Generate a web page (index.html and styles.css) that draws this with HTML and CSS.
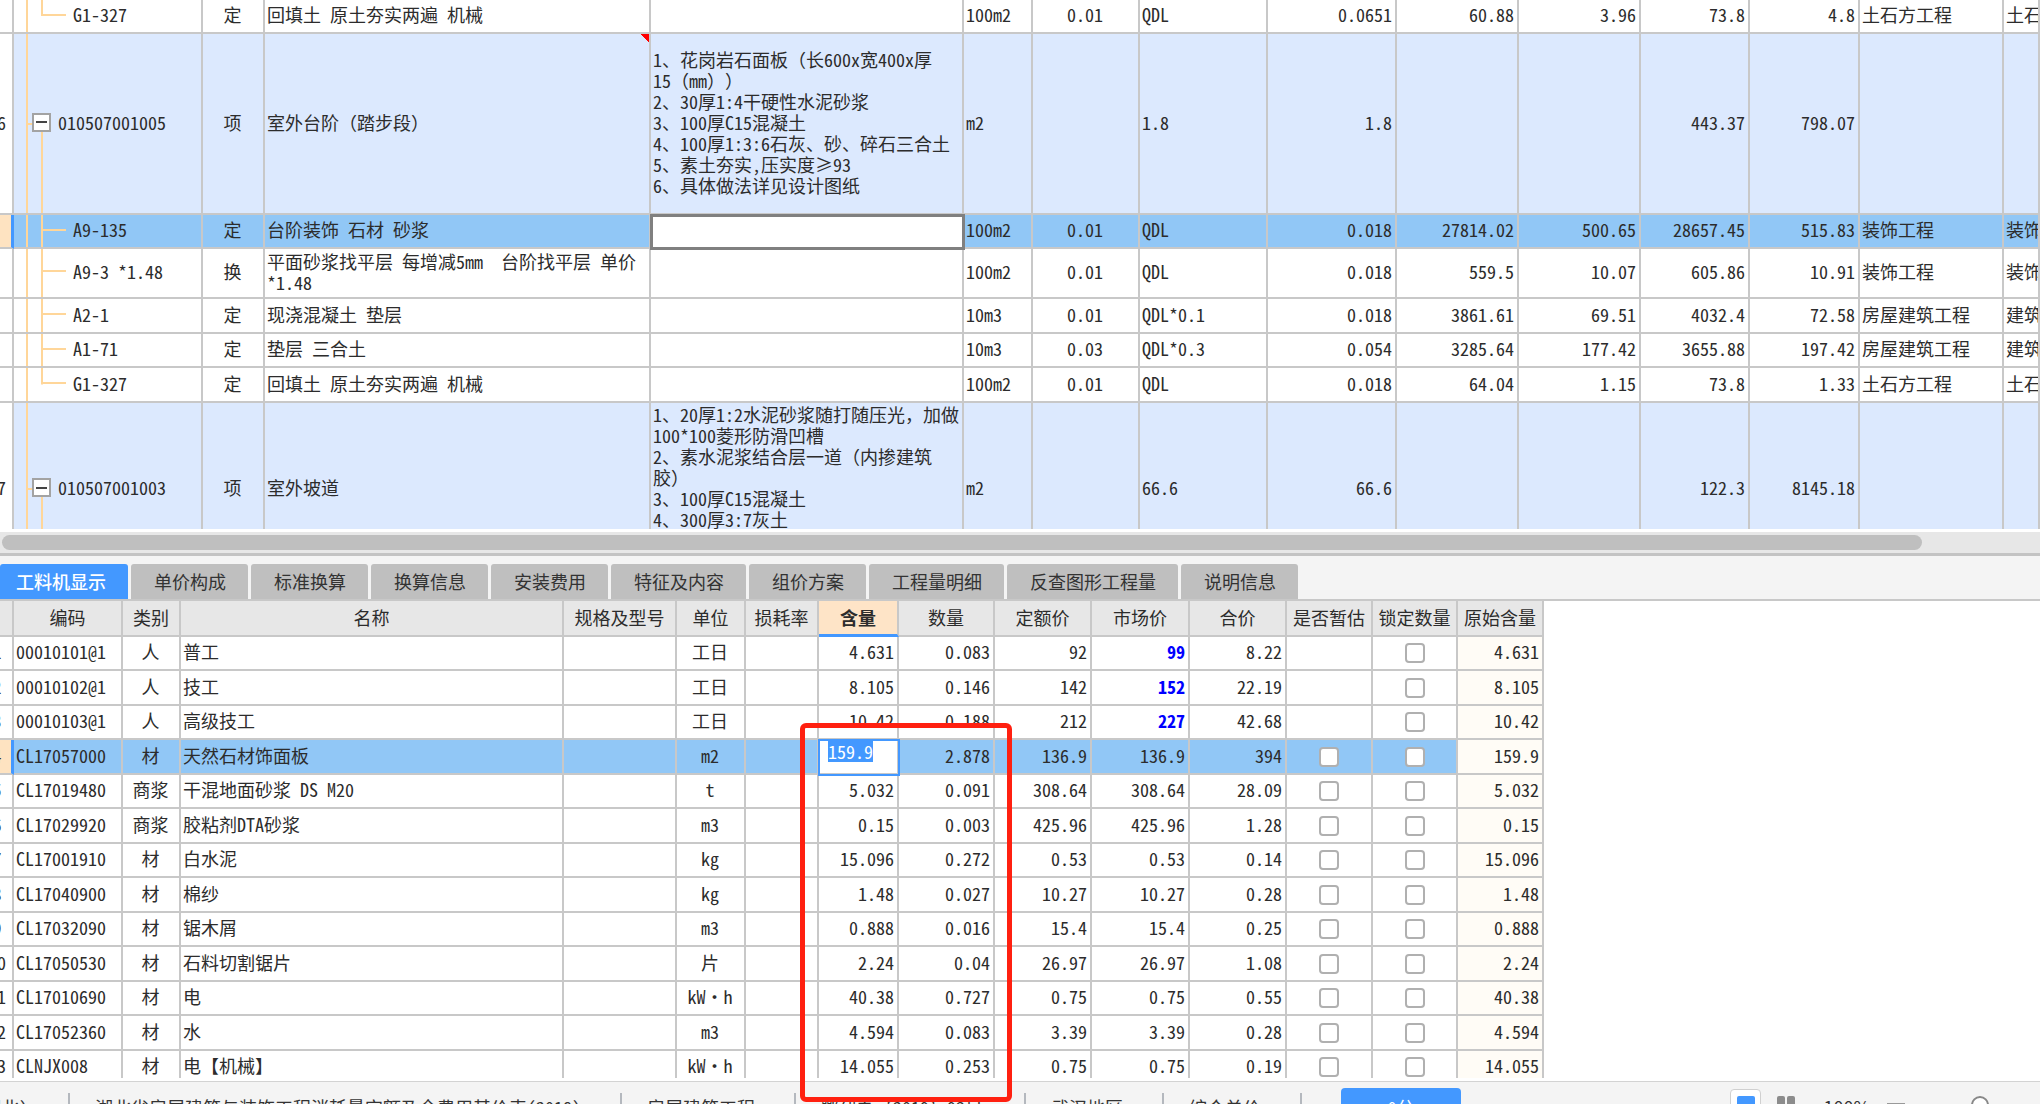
FILE: index.html
```html
<!DOCTYPE html>
<html lang="zh-CN">
<head>
<meta charset="utf-8">
<title>工程计价</title>
<link rel="stylesheet" href="styles.css">
</head>
<body>
<div class="app">
<section class="bill-pane">
<table class="grid bill">
<colgroup><col class="w14"><col class="w189"><col class="w62"><col class="w386"><col class="w313"><col class="w69"><col class="w107"><col class="w128"><col class="w129"><col class="w122"><col class="w122"><col class="w109"><col class="w110"><col class="w144"><col></colgroup>
<tbody>
<tr><td class="no"></td><td class="tree last">G1-327</td><td>定</td><td>回填土 原土夯实两遍 机械</td><td></td><td>100m2</td><td>0.01</td><td>QDL</td><td>0.0651</td><td>60.88</td><td>3.96</td><td>73.8</td><td>4.8</td><td>土石方工程</td><td>土石方工程</td></tr>
<tr class="group"><td class="no"><span>&nbsp;6</span></td><td class="tree head"><div class="node"><button class="toggle" type="button" aria-label="折叠 010507001005"></button>010507001005</div></td><td>项</td><td class="noted">室外台阶<span class="full">（</span>踏步段<span class="full">）</span></td><td>1、花岗岩石面板<span class="full">（</span>长600x宽400x厚
15<span class="full">（</span>mm<span class="full">））</span>
2、30厚1:4干硬性水泥砂浆
3、100厚C15混凝土
4、100厚1:3:6石灰、砂、碎石三合土
5、素土夯实,压实度≥93
6、具体做法详见设计图纸</td><td>m2</td><td></td><td>1.8</td><td>1.8</td><td></td><td></td><td>443.37</td><td>798.07</td><td></td><td></td></tr>
<tr class="selected"><td class="no"></td><td class="tree">A9-135</td><td>定</td><td>台阶装饰 石材 砂浆</td><td class="active-cell"></td><td>100m2</td><td>0.01</td><td>QDL</td><td>0.018</td><td>27814.02</td><td>500.65</td><td>28657.45</td><td>515.83</td><td>装饰工程</td><td>装饰工程</td></tr>
<tr class="double"><td class="no"></td><td class="tree">A9-3 *1.48</td><td>换</td><td>平面砂浆找平层 每增减5mm  台阶找平层 单价
*1.48</td><td></td><td>100m2</td><td>0.01</td><td>QDL</td><td>0.018</td><td>559.5</td><td>10.07</td><td>605.86</td><td>10.91</td><td>装饰工程</td><td>装饰工程</td></tr>
<tr class="tall"><td class="no"></td><td class="tree">A2-1</td><td>定</td><td>现浇混凝土 垫层</td><td></td><td>10m3</td><td>0.01</td><td>QDL*0.1</td><td>0.018</td><td>3861.61</td><td>69.51</td><td>4032.4</td><td>72.58</td><td>房屋建筑工程</td><td>建筑工程</td></tr>
<tr><td class="no"></td><td class="tree">A1-71</td><td>定</td><td>垫层 三合土</td><td></td><td>10m3</td><td>0.03</td><td>QDL*0.3</td><td>0.054</td><td>3285.64</td><td>177.42</td><td>3655.88</td><td>197.42</td><td>房屋建筑工程</td><td>建筑工程</td></tr>
<tr class="tall"><td class="no"></td><td class="tree last">G1-327</td><td>定</td><td>回填土 原土夯实两遍 机械</td><td></td><td>100m2</td><td>0.01</td><td>QDL</td><td>0.018</td><td>64.04</td><td>1.15</td><td>73.8</td><td>1.33</td><td>土石方工程</td><td>土石方工程</td></tr>
<tr class="group ramp"><td class="no"><span>&nbsp;7</span></td><td class="tree head"><div class="node"><button class="toggle" type="button" aria-label="折叠 010507001003"></button>010507001003</div></td><td>项</td><td>室外坡道</td><td class="from-top">1、20厚1:2水泥砂浆随打随压光<span class="full">，</span>加做
100*100菱形防滑凹槽
2、素水泥浆结合层一道<span class="full">（</span>内掺建筑
胶<span class="full">）</span>
3、100厚C15混凝土
4、300厚3:7灰土</td><td>m2</td><td></td><td>66.6</td><td>66.6</td><td></td><td></td><td>122.3</td><td>8145.18</td><td></td><td></td></tr>
</tbody>
</table>
</section>
<div class="hscroll"><div class="thumb"></div></div>
<nav class="tabs">
<button type="button" class="tab current">工料机显示</button><button type="button" class="tab">单价构成</button><button type="button" class="tab">标准换算</button><button type="button" class="tab">换算信息</button><button type="button" class="tab">安装费用</button><button type="button" class="tab">特征及内容</button><button type="button" class="tab">组价方案</button><button type="button" class="tab">工程量明细</button><button type="button" class="tab">反查图形工程量</button><button type="button" class="tab">说明信息</button>
</nav>
<section class="detail-pane">
<div class="detail-clip">
<table class="grid detail">
<colgroup><col class="w14"><col class="w109"><col class="w58"><col class="w383"><col class="w113"><col class="w69"><col class="w73"><col class="w80"><col class="w96"><col class="w97"><col class="w98"><col class="w97"><col class="w86"><col class="w85"><col class="w86"></colgroup>
<thead><tr><th></th><th>编码</th><th>类别</th><th>名称</th><th>规格及型号</th><th>单位</th><th>损耗率</th><th class="sorted">含量</th><th>数量</th><th>定额价</th><th>市场价</th><th>合价</th><th>是否暂估</th><th>锁定数量</th><th>原始含量</th></tr></thead>
<tbody>
<tr><td class="no"><span>1</span></td><td>00010101@1</td><td>人</td><td>普工</td><td></td><td>工日</td><td></td><td>4.631</td><td>0.083</td><td>92</td><td class="changed">99</td><td>8.22</td><td></td><td><input type="checkbox" aria-label="锁定数量"></td><td>4.631</td></tr>
<tr><td class="no"><span>2</span></td><td>00010102@1</td><td>人</td><td>技工</td><td></td><td>工日</td><td></td><td>8.105</td><td>0.146</td><td>142</td><td class="changed">152</td><td>22.19</td><td></td><td><input type="checkbox" aria-label="锁定数量"></td><td>8.105</td></tr>
<tr><td class="no"><span>3</span></td><td>00010103@1</td><td>人</td><td>高级技工</td><td></td><td>工日</td><td></td><td>10.42</td><td>0.188</td><td>212</td><td class="changed">227</td><td>42.68</td><td></td><td><input type="checkbox" aria-label="锁定数量"></td><td>10.42</td></tr>
<tr class="selected"><td class="no"><span>4</span></td><td>CL17057000</td><td>材</td><td>天然石材饰面板</td><td></td><td>m2</td><td></td><td class="editing"><input class="editor" type="text" value="159.9" aria-label="含量"></td><td>2.878</td><td>136.9</td><td>136.9</td><td>394</td><td><input type="checkbox" aria-label="是否暂估"></td><td><input type="checkbox" aria-label="锁定数量"></td><td>159.9</td></tr>
<tr><td class="no"><span>5</span></td><td>CL17019480</td><td>商浆</td><td>干混地面砂浆 DS M20</td><td></td><td>t</td><td></td><td>5.032</td><td>0.091</td><td>308.64</td><td>308.64</td><td>28.09</td><td><input type="checkbox" aria-label="是否暂估"></td><td><input type="checkbox" aria-label="锁定数量"></td><td>5.032</td></tr>
<tr><td class="no"><span>6</span></td><td>CL17029920</td><td>商浆</td><td>胶粘剂DTA砂浆</td><td></td><td>m3</td><td></td><td>0.15</td><td>0.003</td><td>425.96</td><td>425.96</td><td>1.28</td><td><input type="checkbox" aria-label="是否暂估"></td><td><input type="checkbox" aria-label="锁定数量"></td><td>0.15</td></tr>
<tr><td class="no"><span>7</span></td><td>CL17001910</td><td>材</td><td>白水泥</td><td></td><td>kg</td><td></td><td>15.096</td><td>0.272</td><td>0.53</td><td>0.53</td><td>0.14</td><td><input type="checkbox" aria-label="是否暂估"></td><td><input type="checkbox" aria-label="锁定数量"></td><td>15.096</td></tr>
<tr><td class="no"><span>8</span></td><td>CL17040900</td><td>材</td><td>棉纱</td><td></td><td>kg</td><td></td><td>1.48</td><td>0.027</td><td>10.27</td><td>10.27</td><td>0.28</td><td><input type="checkbox" aria-label="是否暂估"></td><td><input type="checkbox" aria-label="锁定数量"></td><td>1.48</td></tr>
<tr><td class="no"><span>9</span></td><td>CL17032090</td><td>材</td><td>锯木屑</td><td></td><td>m3</td><td></td><td>0.888</td><td>0.016</td><td>15.4</td><td>15.4</td><td>0.25</td><td><input type="checkbox" aria-label="是否暂估"></td><td><input type="checkbox" aria-label="锁定数量"></td><td>0.888</td></tr>
<tr><td class="no"><span>10</span></td><td>CL17050530</td><td>材</td><td>石料切割锯片</td><td></td><td>片</td><td></td><td>2.24</td><td>0.04</td><td>26.97</td><td>26.97</td><td>1.08</td><td><input type="checkbox" aria-label="是否暂估"></td><td><input type="checkbox" aria-label="锁定数量"></td><td>2.24</td></tr>
<tr><td class="no"><span>11</span></td><td>CL17010690</td><td>材</td><td>电</td><td></td><td>kW·h</td><td></td><td>40.38</td><td>0.727</td><td>0.75</td><td>0.75</td><td>0.55</td><td><input type="checkbox" aria-label="是否暂估"></td><td><input type="checkbox" aria-label="锁定数量"></td><td>40.38</td></tr>
<tr><td class="no"><span>12</span></td><td>CL17052360</td><td>材</td><td>水</td><td></td><td>m3</td><td></td><td>4.594</td><td>0.083</td><td>3.39</td><td>3.39</td><td>0.28</td><td><input type="checkbox" aria-label="是否暂估"></td><td><input type="checkbox" aria-label="锁定数量"></td><td>4.594</td></tr>
<tr><td class="no"><span>13</span></td><td>CLNJX008</td><td>材</td><td>电【机械】</td><td></td><td>kW·h</td><td></td><td>14.055</td><td>0.253</td><td>0.75</td><td>0.75</td><td>0.19</td><td><input type="checkbox" aria-label="是否暂估"></td><td><input type="checkbox" aria-label="锁定数量"></td><td>14.055</td></tr>
</tbody>
</table>
</div>
<div class="callout"></div>
</section>
<footer class="status">
<div class="status-row">
<span class="item first">(湖北)</span><span class="item">湖北省房屋建筑与装饰工程消耗量定额及全费用基价表(2018)</span><span class="item">房屋建筑工程</span><span class="item doc">鄂建办〔2019〕93号</span><span class="item">武汉地区</span><span class="item">综合单价</span>
<button type="button" class="score">0分</button>
<div class="zoom">
<button type="button" class="view on" aria-label="单栏"><svg width="18" height="22" viewBox="0 0 18 22"><rect width="18" height="22" rx="2" fill="#4398ff"/></svg></button>
<button type="button" class="view" aria-label="双栏"><svg width="18" height="22" viewBox="0 0 18 22"><rect width="8" height="22" rx="2" fill="#8c8c8c"/><rect x="10" width="8" height="22" rx="2" fill="#8c8c8c"/></svg></button>
<span class="percent full">100%</span>
<button type="button" class="minus" aria-label="缩小"></button>
<input type="range" class="slider" aria-label="缩放" min="0" max="100" value="42">
</div>
</div>
</footer>
</div>
</body>
</html>
```

FILE: styles.css
```css
* { box-sizing: border-box; }

body {
  margin: 0;
  background: #fff;
  color: #2c2c2c;
  font-family: "Noto Sans CJK SC", sans-serif;
  font-size: 18px;
  line-height: 21px;
  font-feature-settings: "hwid";
  text-spacing-trim: space-all;
  overflow: hidden;
}

/* keeps full-width punctuation at its full width */
.full { font-feature-settings: normal; }

button, input { font: inherit; color: inherit; font-feature-settings: inherit; margin: 0; padding: 0; }
button { border: 0; background: none; }

.app { display: flex; flex-direction: column; height: 100vh; }

/* shared grid */
.grid { table-layout: fixed; border-collapse: separate; border-spacing: 0; }
.grid th, .grid td {
  padding: 0 3px 3px 2px;
  border: solid #c8c8c8;
  border-width: 0 2px 2px 0;
  overflow: hidden;
  white-space: pre;
  vertical-align: middle;
}
.grid th { font-weight: 400; background: #e7e7e7; text-align: center; padding: 0 0 1px; }
.grid tr { height: 34px; }
.grid .no { padding: 0 0 3px; background: #fff; }
.grid .no span { display: block; width: 32px; margin-left: -19px; text-align: center; }
.grid .selected td { background-color: #91c7f6; }
.grid .selected .no { background: #fee3c1; border-right: 3px solid #4398ff; }

/* bill of quantities */
.bill-pane { height: calc(50vh - 23px); flex: none; overflow: hidden; }
.bill { width: 100%; }
.bill td:nth-child(3), .bill td:nth-child(7) { text-align: center; }
.bill td:nth-child(n+9):nth-child(-n+13) { text-align: right; }
.bill .tall { height: 35px; }
.bill .group { height: 181px; }
.bill .ramp { height: 174px; }
.bill .double { height: 50px; }
.bill .group td:not(.no) { background-color: #dce9fe; }
.bill .from-top { vertical-align: top; padding-top: 1px; }

.bill .tree {
  padding-left: 59px;
  background-image: linear-gradient(#ffd699, #ffd699), linear-gradient(#ffd699, #ffd699), linear-gradient(#ffd699, #ffd699);
  background-repeat: no-repeat;
  background-size: 2px 100%, 2px 100%, 24px 2px;
  background-position: 12px 0, 27px 0, 28px 45%;
}
.bill .tree.last { background-size: 2px 100%, 2px 50%, 24px 2px; }
.bill .tree.head {
  padding-left: 18px;
  background-size: 2px 100%, 2px 50%, 6px 2px;
  background-position: 12px 0, 27px 100%, 13px 50%;
}
.node { display: flex; align-items: center; gap: 7px; }
.toggle {
  width: 19px;
  height: 19px;
  border: 2px solid #a3a3a3;
  background: linear-gradient(#444, #444) center / 11px 2px no-repeat #fff;
}
.bill .noted {
  background-image: linear-gradient(to top right, transparent 50%, #f00 50%);
  background-size: 9px 8px;
  background-position: 100% 0;
  background-repeat: no-repeat;
}
.bill .selected .active-cell { background: #fff; outline: 3px solid #808080; outline-offset: -2px; }

.hscroll {
  flex: none;
  height: 24px;
  margin-top: 3px;
  padding: 3px 2px;
  background: #e7e7e7;
  border-bottom: 3px solid #c3c3c3;
}
.thumb { width: calc(100% - 116px); height: 15px; border-radius: 8px; background: #bfbfbf; }

/* tabs */
.tabs {
  flex: none;
  display: flex;
  gap: 3px;
  padding-top: 8px;
  background: #f4f4f4;
  border-bottom: 2px solid #c8c8c8;
}
.tab { height: 35px; padding: 0 22px 0 23px; border-radius: 3px 3px 0 0; background: #bfbfbf; color: #333; }
.tab.current { padding: 0 22px 0 16px; background: #4398ff; color: #fff; font-weight: 500; }

/* resources */
.detail-pane { position: relative; flex: 1; min-height: 0; }
.detail-clip { height: 100%; overflow: hidden; }
.detail { width: 1544px; }
.detail thead tr { height: 36px; }
.detail tbody tr:nth-child(even) { height: 35px; }
.detail td:nth-child(3), .detail td:nth-child(6), .detail td:nth-child(13), .detail td:nth-child(14) { text-align: center; }
.detail td:nth-child(13), .detail td:nth-child(14) { padding: 0; }
.detail td:nth-child(n+8):nth-child(-n+12), .detail td:nth-child(15) { text-align: right; }
.detail td:nth-child(15) { background-color: #fffcf6; }
.detail .sorted { background: #fee4c7; font-weight: 700; border-bottom: 3px solid #4398ff; }
.detail .changed { color: #00f; font-weight: 700; }
.detail .selected .editing { padding: 0 0 0 9px; background: #fff; outline: 2px solid #4398ff; outline-offset: -1px; vertical-align: top; text-align: left; }
.editor { display: block; width: 45px; height: 21px; margin-top: 1px; border: 0; background: #4398ff; color: #fff; }
input[type="checkbox"] {
  appearance: none;
  display: block;
  width: 20px;
  height: 20px;
  margin: 0 auto;
  border: 2px solid #b0b0b0;
  border-radius: 4px;
  background: #fff;
}
.callout {
  position: absolute;
  left: 800px;
  top: 122px;
  bottom: -24px;
  width: 212px;
  border: 5px solid #ff2010;
  border-radius: 6px;
  z-index: 2;
}

/* status bar: its lower half lies below the fold */
.status { flex: none; height: 23px; margin-top: 3px; overflow: hidden; background: #f4f4f4; border-top: 1px solid #d3d3d3; }
.status-row { display: flex; align-items: center; height: 50px; white-space: pre; color: #333; }
.item { padding: 0 39px 0 25px; border-right: 2px solid #b4b8be; line-height: 28px; }
.item.first { margin-left: -26px; padding-left: 0; padding-right: 40px; }
.item.doc { padding: 0 41px 0 25px; }
.score { width: 120px; height: 38px; margin-left: 39px; border-radius: 4px; background: #4398ff; color: #fff; }
.zoom { display: flex; align-items: center; margin-left: auto; }
.view { display: flex; align-items: center; justify-content: center; width: 31px; height: 36px; margin-right: 9px; }
.view.on { background: #fff; border: 1px solid #d0d0d0; border-radius: 4px; }
.percent { margin: 0 17px 0 13px; }
.minus { width: 18px; height: 8px; margin-right: 17px; background: #999; }
.slider { appearance: none; width: 134px; height: 22px; margin-right: -16px; background: linear-gradient(#ccc, #ccc) center / 100% 6px no-repeat; }
.slider::-webkit-slider-thumb { appearance: none; width: 18px; height: 22px; border: 2px solid #888; border-radius: 9px; background: #fff; }

.w14 { width: 14px; }
.w58 { width: 58px; }
.w62 { width: 62px; }
.w69 { width: 69px; }
.w73 { width: 73px; }
.w80 { width: 80px; }
.w85 { width: 85px; }
.w86 { width: 86px; }
.w96 { width: 96px; }
.w97 { width: 97px; }
.w98 { width: 98px; }
.w107 { width: 107px; }
.w109 { width: 109px; }
.w110 { width: 110px; }
.w113 { width: 113px; }
.w122 { width: 122px; }
.w128 { width: 128px; }
.w129 { width: 129px; }
.w144 { width: 144px; }
.w189 { width: 189px; }
.w313 { width: 313px; }
.w383 { width: 383px; }
.w386 { width: 386px; }
```
